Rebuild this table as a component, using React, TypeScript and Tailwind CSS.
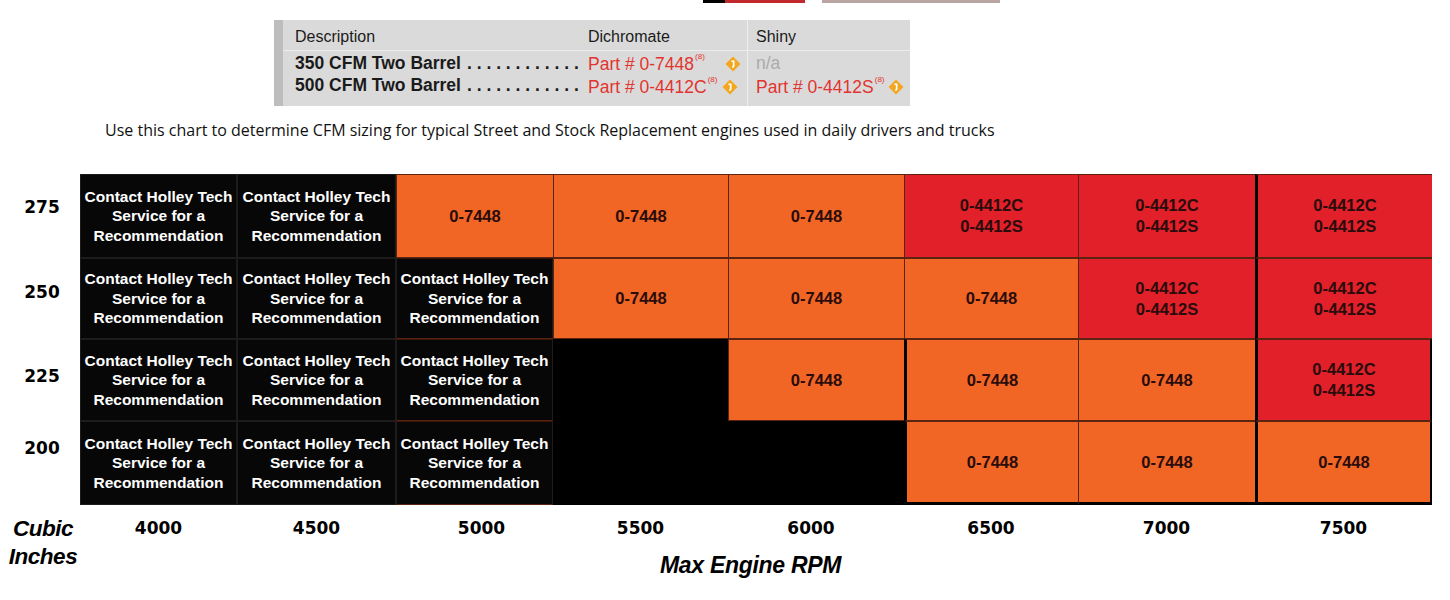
import React from "react";

type Cell = "x" | "o" | "r" | "-";

const COLS = ["4000", "4500", "5000", "5500", "6000", "6500", "7000", "7500"];

const ROWS: { cid: string; pt: string; cells: Cell[] }[] = [
  { cid: "275", pt: "pt-[23px]", cells: ["x", "x", "o", "o", "o", "r", "r", "r"] },
  { cid: "250", pt: "pt-[24px]", cells: ["x", "x", "x", "o", "o", "o", "r", "r"] },
  { cid: "225", pt: "pt-[27px]", cells: ["x", "x", "x", "-", "o", "o", "o", "r"] },
  { cid: "200", pt: "pt-[17px]", cells: ["x", "x", "x", "-", "-", "o", "o", "o"] },
];

const Diamond = () => (
  <svg width="16" height="16" viewBox="0 0 14 14" className="inline-block shrink-0">
    <polygon points="7,0.5 13.5,7 7,13.5 0.5,7" fill="#f4a61c" />
    <path d="M5.6 4.6 H7.6 V8.6 Q7.6 9.8 6.2 9.6" stroke="#fff" strokeWidth="1.5" fill="none" />
  </svg>
);

const Part = ({ no }: { no: string }) => (
  <span className="text-[#e2342f] whitespace-nowrap shrink-0">
    Part # {no}
    <sup className="text-[8px] ml-px align-[7px]">(8)</sup>
  </span>
);

const Dots = () => (
  <span className="whitespace-pre font-bold pl-[6px]">{". . . . . . . . . . . ."}</span>
);

function DataCell({ kind, col, row }: { kind: Cell; col: number; row: number }) {
  const thickLeft = col === 7 || (col === 5 && row >= 2);
  if (kind === "-") return <div className="bg-black" />;
  if (kind === "x")
    return (
      <div
        className={`bg-[#070707] border border-[#1c1c1c] flex flex-col items-center justify-center text-white font-bold text-[15.5px] leading-[19.5px] text-center ${
          col === 2 && row > 0 ? "border-b-[#5c2210] border-t-[#3a160a]" : ""
        }`}
      >
        <span>Contact Holley Tech</span>
        <span>Service for a</span>
        <span>Recommendation</span>
      </div>
    );
  return (
    <div
      className={`${kind === "o" ? "bg-[#f16624]" : "bg-[#e1202a]"} ${
        thickLeft ? "border-l-[3px] border-l-black" : "border-l border-l-[#5a2410]"
      } ${row === 3 && col >= 5 ? "border-b-[3px] border-b-black" : "border-b border-b-[#5a2410]"} ${
        col === 7 && row >= 2 ? "border-r-2 border-r-black" : ""
      } border-t border-t-[#5a2410] flex flex-col items-center justify-center text-[#2a0c0c] font-bold text-[16.5px] leading-[21px]`}
    >
      {kind === "o" ? (
        <span>0-7448</span>
      ) : (
        <>
          <span>0-4412C</span>
          <span>0-4412S</span>
        </>
      )}
    </div>
  );
}

export default function App() {
  return (
    <div className="w-[1450px] h-[600px] bg-white overflow-hidden font-['Liberation_Sans',Arial,sans-serif] text-black">
      {/* cropped artwork peeking in at the top edge */}
      <div className="flex h-[3px] ml-[703px]">
        <div className="w-[22px] bg-black" />
        <div className="w-[80px] bg-[#c0282a]" />
        <div className="w-[17px]" />
        <div className="w-[178px] bg-[#b9a6a2]" />
      </div>

      {/* part number table */}
      <div className="ml-[274px] mt-[17px] w-[636px] h-[86px] bg-[#dadada] flex">
        <div className="w-[9px] bg-[#bdbdbd]" />
        <div className="flex-1 flex flex-col text-[#1a1a1a]">
          <div className="flex h-[31px] pt-[7px] pl-[12px] border-b border-[#ececec] text-[16px] leading-[20px]">
            <span className="w-[293px]">Description</span>
            <span className="w-[159px]">Dichromate</span>
            <span className="pl-[8px] -mt-[7px] pt-[7px] border-l border-[#efefef]">Shiny</span>
          </div>
          <div className="flex h-[23px] pt-[2px] pl-[12px] text-[17.5px] leading-[20px]">
            <div className="w-[293px] flex font-bold">
              <span className="whitespace-nowrap">350 CFM Two Barrel</span>
              <Dots />
            </div>
            <div className="w-[159px] flex items-center">
              <Part no="0-7448" />
              <span className="ml-[20px] flex">
                <Diamond />
              </span>
            </div>
            <span className="pl-[8px] -mt-[2px] pt-[2px] border-l border-[#efefef] text-[#ababab]">n/a</span>
          </div>
          <div className="flex h-[24px] pt-[1px] pl-[12px] text-[17.5px] leading-[20px]">
            <div className="w-[293px] flex font-bold">
              <span className="whitespace-nowrap">500 CFM Two Barrel</span>
              <Dots />
            </div>
            <div className="w-[159px] flex items-center">
              <Part no="0-4412C" />
              <span className="ml-[5px] flex">
                <Diamond />
              </span>
            </div>
            <span className="pl-[8px] -mt-[1px] pt-[1px] border-l border-[#efefef] flex items-center">
              <Part no="0-4412S" />
              <span className="ml-[3px] flex">
                <Diamond />
              </span>
            </span>
          </div>
          <div className="flex flex-1 pl-[12px]">
            <span className="w-[452px]" />
            <span className="border-l border-[#efefef]" />
          </div>
        </div>
      </div>

      <p className="ml-[105px] mt-[14px] text-[16px] leading-[20px] font-['Open_Sans',sans-serif] text-[#111]">
        Use this chart to determine CFM sizing for typical Street and Stock Replacement engines used in daily drivers and trucks
      </p>

      {/* chart */}
      <div className="mt-[34px] grid grid-cols-[80px_157px_159px_157px_175px_176px_174px_177px_177px] grid-rows-[84px_81px_82px_84px_46px]">
        {ROWS.map((r, ri) => (
          <React.Fragment key={r.cid}>
            <div className={`${r.pt} pl-[4px] text-center font-['DejaVu_Sans',sans-serif] font-bold text-[17px] leading-[20px]`}>
              {r.cid}
            </div>
            {r.cells.map((c, ci) => (
              <DataCell key={ci} kind={c} col={ci} row={ri} />
            ))}
          </React.Fragment>
        ))}
        <div className="pt-[10px] pl-[6px] text-center font-bold italic text-[22.5px] leading-[28px] tracking-[-0.5px]">
          Cubic
          <br />
          Inches
        </div>
        {COLS.map((c, i) => (
          <div
            key={c}
            className={`pt-[13px] text-center font-['DejaVu_Sans',sans-serif] font-bold text-[17px] leading-[20px] ${
              i === 2 ? "pl-[14px]" : i === 4 ? "pr-[10px]" : ""
            }`}
          >
            {c}
          </div>
        ))}
      </div>
      <div className="ml-[660px] mt-[1px] font-bold italic text-[23px] leading-[26px] tracking-[-0.3px]">Max Engine RPM</div>
    </div>
  );
}
